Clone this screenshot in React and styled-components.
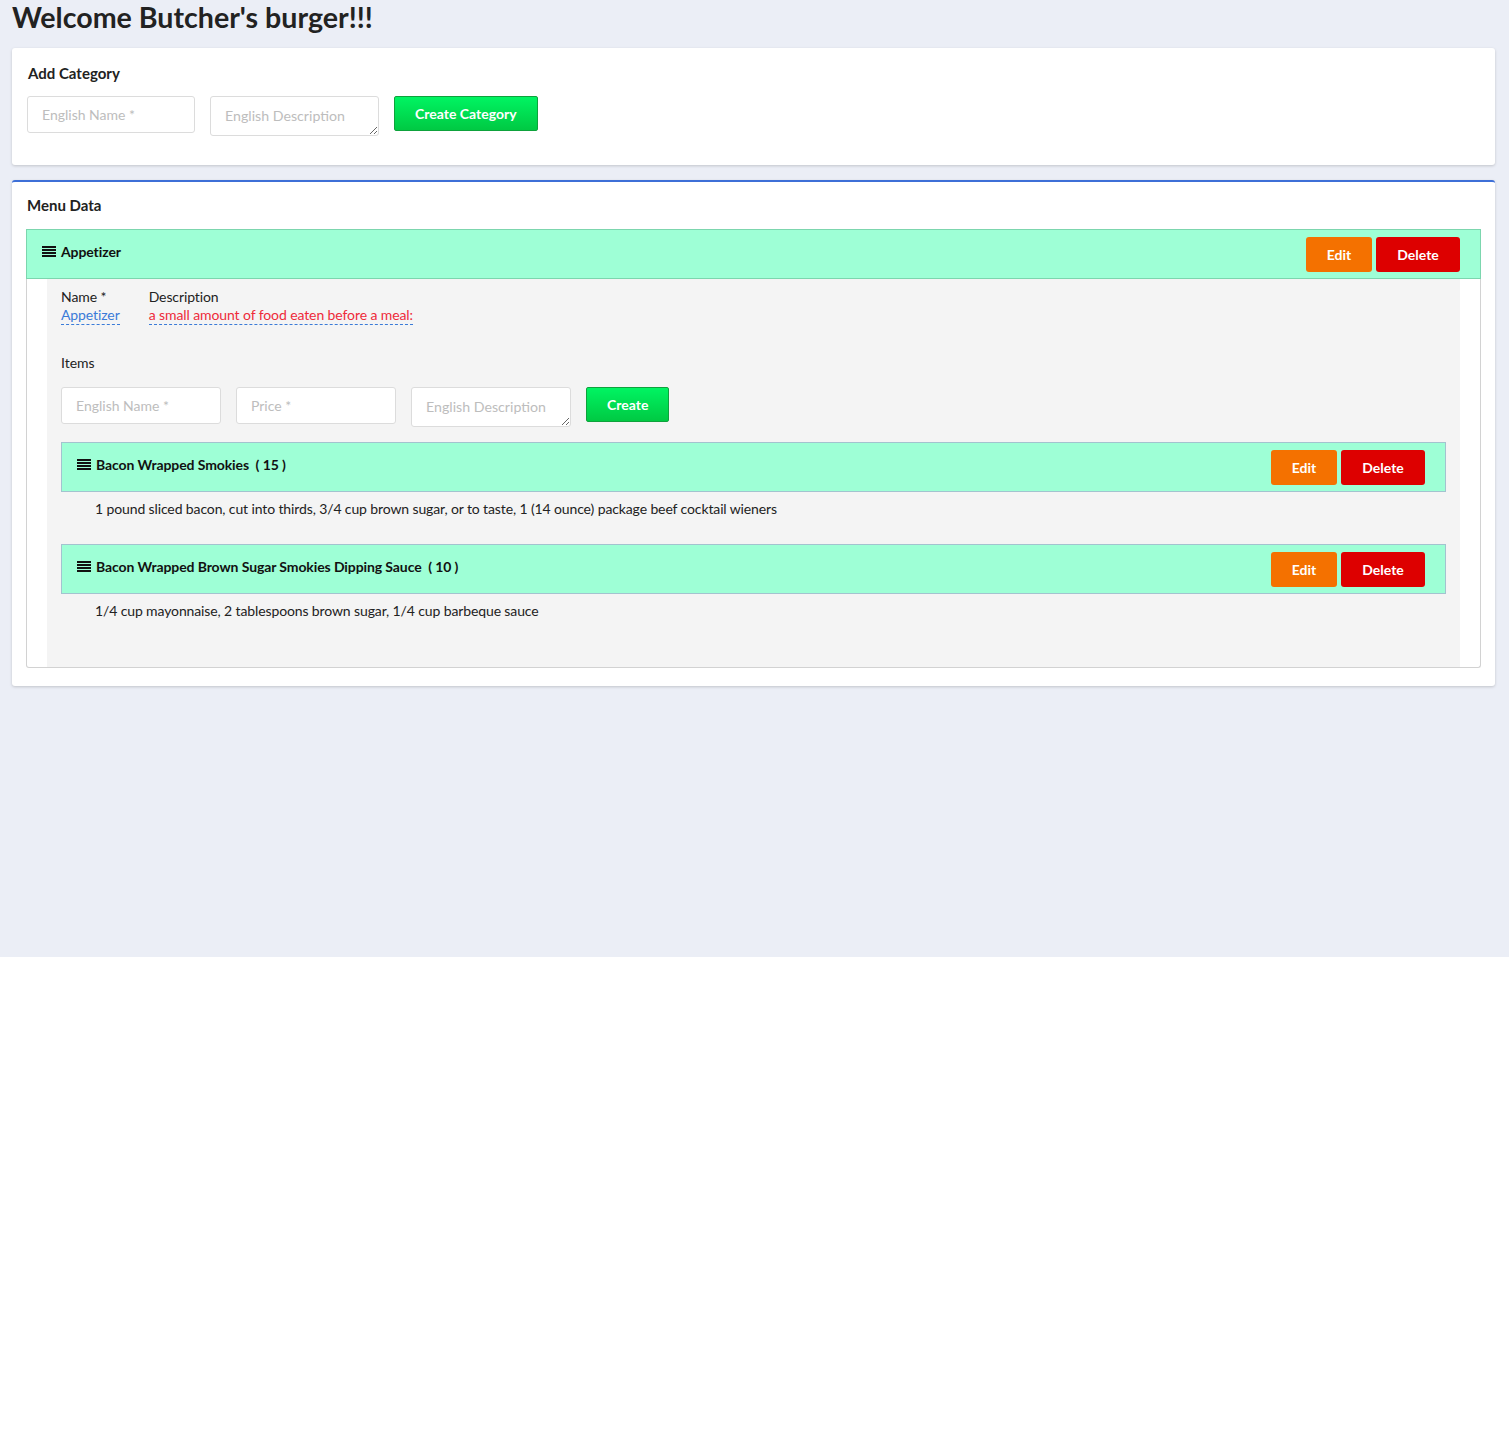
import styled, { createGlobalStyle } from "styled-components";

const GlobalStyle = createGlobalStyle`
  body {
    margin: 0;
    font-family: Lato, "Open Sans", sans-serif;
    color: #222;
    background: #fff;
  }
  * { box-sizing: border-box; }
`;

const categories = [
  {
    name: "Appetizer",
    description: "a small amount of food eaten before a meal:",
    items: [
      {
        name: "Bacon Wrapped Smokies",
        price: 15,
        description:
          "1 pound sliced bacon, cut into thirds, 3/4 cup brown sugar, or to taste, 1 (14 ounce) package beef cocktail wieners",
      },
      {
        name: "Bacon Wrapped Brown Sugar Smokies Dipping Sauce",
        price: 10,
        description:
          "1/4 cup mayonnaise, 2 tablespoons brown sugar, 1/4 cup barbeque sauce",
      },
    ],
  },
];

function BarsIcon() {
  return (
    <svg width="14" height="12" viewBox="0 0 14 12">
      <rect x="0" y="1" width="14" height="2" fill="#111" />
      <rect x="0" y="4" width="14" height="2" fill="#111" />
      <rect x="0" y="7" width="14" height="2" fill="#111" />
      <rect x="0" y="10" width="14" height="2" fill="#111" />
    </svg>
  );
}

function RowHeader({ title }) {
  return (
    <HeaderBar>
      <HeaderTitle>
        <BarsIcon />
        {title}
      </HeaderTitle>
      <Actions>
        <ActionButton color="#f47100">Edit</ActionButton>
        <ActionButton color="#dd0000" wide>
          Delete
        </ActionButton>
      </Actions>
    </HeaderBar>
  );
}

export default function App() {
  return (
    <>
      <GlobalStyle />
      <Page>
        <Title>Welcome Butcher's burger!!!</Title>

        <Card>
          <CardTitle>Add Category</CardTitle>
          <FormRow>
            <Input placeholder="English Name *" width={168} />
            <TextArea placeholder="English Description" width={169} />
            <GreenButton>Create Category</GreenButton>
          </FormRow>
        </Card>

        <Card accent>
          <CardTitle>Menu Data</CardTitle>
          {categories.map((cat) => (
            <Panel key={cat.name}>
              <RowHeader title={cat.name} />
              <PanelBody>
                <PanelInner>
                  <Fields>
                    <Field>
                      <FieldLabel>Name *</FieldLabel>
                      <FieldValue color="#3a7bd8">{cat.name}</FieldValue>
                    </Field>
                    <Field>
                      <FieldLabel>Description</FieldLabel>
                      <FieldValue color="#ee2a3a">{cat.description}</FieldValue>
                    </Field>
                  </Fields>

                  <SectionLabel>Items</SectionLabel>
                  <FormRow small>
                    <Input placeholder="English Name *" width={160} />
                    <Input placeholder="Price *" width={160} />
                    <TextArea placeholder="English Description" width={160} />
                    <GreenButton>Create</GreenButton>
                  </FormRow>

                  {cat.items.map((item) => (
                    <Item key={item.name}>
                      <RowHeader title={`${item.name}  ( ${item.price} )`} />
                      <ItemText>{item.description}</ItemText>
                    </Item>
                  ))}
                </PanelInner>
              </PanelBody>
            </Panel>
          ))}
        </Card>
      </Page>
    </>
  );
}

const Page = styled.div`
  background: #ebeef6;
  min-height: 957px;
  padding: 0 14px 0 12px;
  overflow: hidden;
`;

const Title = styled.h1`
  margin: 0 0 14px;
  font-size: 28.6px;
  line-height: 34px;
  font-weight: 700;
  color: #222;
`;

const Card = styled.div`
  display: flex;
  flex-direction: column;
  background: #fff;
  border-radius: 3px;
  box-shadow: 0 1px 3px rgba(0, 0, 0, 0.18);
  border-top: ${(p) => (p.accent ? "2px solid #3d6fd7" : "none")};
  padding: ${(p) => (p.accent ? "13px 14px 18px" : "15px 15px 29px")};
  margin-bottom: 15px;
`;

const CardTitle = styled.div`
  font-size: 15px;
  font-weight: 700;
  line-height: 20px;
  color: #222;
  margin-bottom: 13px;
  padding-left: 1px;
`;

const FormRow = styled.div`
  display: flex;
  align-items: flex-start;
  gap: 15px;
  margin-bottom: ${(p) => (p.small ? "15px" : "0")};
`;

const Input = styled.input`
  width: ${(p) => p.width}px;
  height: 37px;
  border: 1px solid #dcdcdc;
  border-radius: 3px;
  padding: 0 14px;
  font-family: Lato, sans-serif;
  font-size: 14px;
  background: #fff;
  outline: none;
  &::placeholder {
    color: #bdbdbd;
  }
`;

const TextArea = styled.textarea`
  width: ${(p) => p.width}px;
  height: 40px;
  border: 1px solid #dcdcdc;
  border-radius: 3px;
  padding: 9px 14px;
  font-family: Lato, sans-serif;
  font-size: 14.2px;
  line-height: 20px;
  background: #fff;
  outline: none;
  &::placeholder {
    color: #bdbdbd;
  }
`;

const GreenButton = styled.button`
  height: 35px;
  padding: 0 20px;
  border: 1px solid #0ea23c;
  border-radius: 2px;
  background: linear-gradient(#00f462, #00c943);
  color: #fff;
  font-family: Lato, sans-serif;
  font-size: 14px;
  font-weight: 700;
  cursor: pointer;
`;

const Panel = styled.div`
  display: flex;
  flex-direction: column;
  margin-top: 1px;
`;

const HeaderBar = styled.div`
  display: flex;
  align-items: center;
  justify-content: space-between;
  height: 50px;
  padding: 0 20px 0 15px;
  background: #9effd6;
  border: 1px solid #7cd6ae;
`;

const HeaderTitle = styled.div`
  display: flex;
  align-items: center;
  gap: 5px;
  font-size: 14px;
  font-weight: 700;
  color: #111;
  white-space: pre;
  letter-spacing: -0.1px;
  margin-top: -6px;
`;

const Actions = styled.div`
  display: flex;
  gap: 4px;
  margin-top: 1px;
`;

const ActionButton = styled.button`
  width: ${(p) => (p.wide ? 84 : 66)}px;
  height: 35px;
  border: none;
  border-radius: 3px;
  background: ${(p) => p.color};
  color: #fff;
  font-family: Lato, sans-serif;
  font-size: 14px;
  font-weight: 700;
  cursor: pointer;
`;

const PanelBody = styled.div`
  background: #fff;
  border: 1px solid #d2d2d2;
  border-top: none;
  border-radius: 0 0 3px 3px;
  padding: 0 20px;
`;

const PanelInner = styled.div`
  background: #f4f4f4;
  padding: 8px 14px 46px;
`;

const Fields = styled.div`
  display: flex;
  gap: 29px;
  margin-bottom: 28px;
`;

const Field = styled.div`
  display: flex;
  flex-direction: column;
  align-items: flex-start;
  font-size: 14px;
  line-height: 19px;
  letter-spacing: -0.1px;
`;

const FieldLabel = styled.span`
  color: #222;
`;

const FieldValue = styled.span`
  color: ${(p) => p.color};
  border-bottom: 1px dashed #3a7bd8;
  line-height: 18px;
`;

const SectionLabel = styled.div`
  font-size: 14px;
  line-height: 20px;
  color: #222;
  margin-bottom: 14px;
`;

const Item = styled.div`
  & + & {
    margin-top: 25px;
  }
  ${HeaderBar} {
    border-color: #a3c3cf;
  }
`;

const ItemText = styled.div`
  font-size: 14px;
  line-height: 20px;
  color: #222;
  letter-spacing: -0.12px;
  padding: 7px 0 0 34px;
`;
